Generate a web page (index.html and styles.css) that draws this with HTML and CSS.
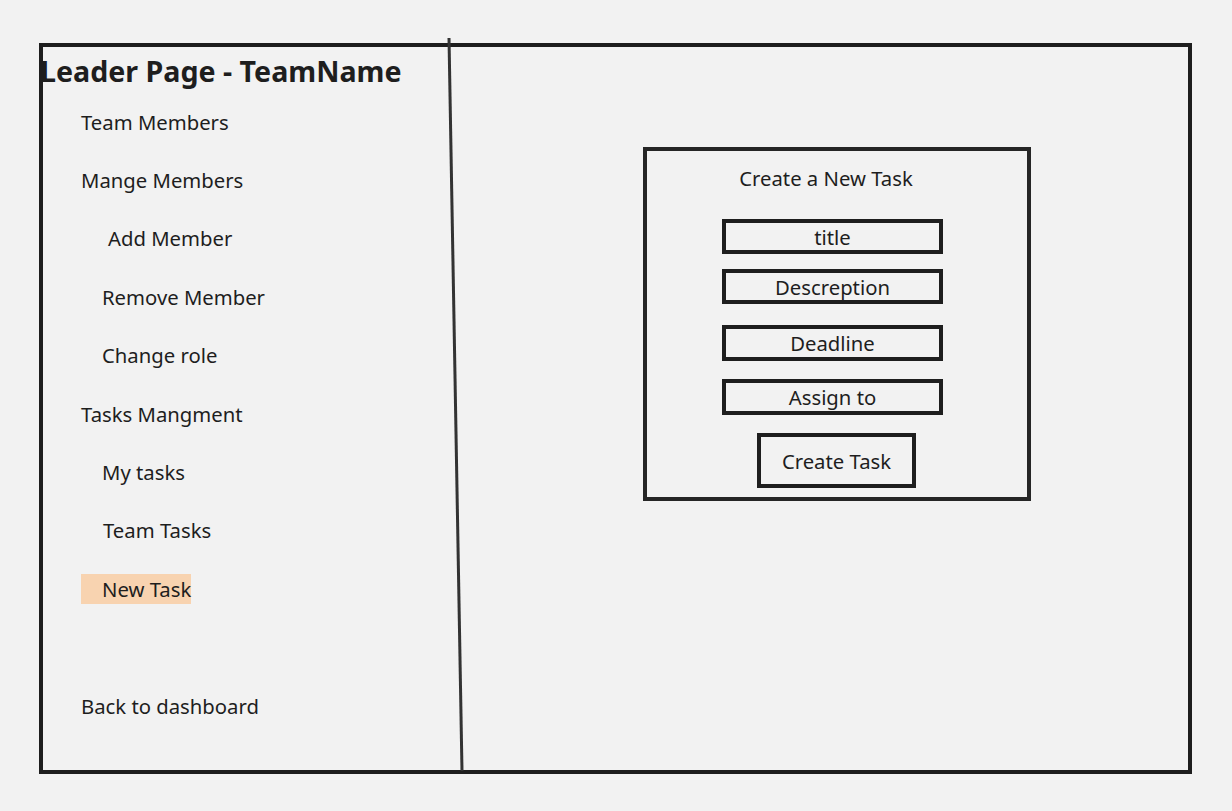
FILE: index.html
```html
<!DOCTYPE html>
<html lang="en">
<head>
<meta charset="UTF-8">
<meta name="viewport" content="width=device-width, initial-scale=1.0">
<title>Leader Page - New Task</title>
<link rel="stylesheet" href="styles.css">
</head>
<body>

<div class="frame">
  <div class="sidebar">
    <h1 class="page-title">Leader Page - TeamName</h1>
    <div class="nav-item">Team Members</div>
    <div class="nav-item">Mange Members</div>
    <div class="nav-item sub-wide">Add Member</div>
    <div class="nav-item sub">Remove Member</div>
    <div class="nav-item sub">Change role</div>
    <div class="nav-item">Tasks Mangment</div>
    <div class="nav-item sub">My tasks</div>
    <div class="nav-item sub team">Team Tasks</div>
    <div class="nav-item"><span class="active">New Task</span></div>
    <div class="nav-item"></div>
    <div class="nav-item">Back to dashboard</div>
  </div>

  <!-- hand drawn divider between the menu and the content -->
  <svg class="divider" width="30" height="735" viewBox="0 0 30 735">
    <line x1="6" y1="0" x2="19" y2="733" stroke="#333" stroke-width="3"/>
  </svg>

  <div class="main">
    <div class="task-card">
      <div class="card-title">Create a New Task</div>
      <div class="field f-title">title</div>
      <div class="field f-desc">Descreption</div>
      <div class="field f-deadline">Deadline</div>
      <div class="field f-assign">Assign to</div>
      <div class="create-btn">Create Task</div>
    </div>
  </div>
</div>

</body>
</html>
```

FILE: styles.css
```css
body {
  margin: 0;
  background: #f2f2f2;
  font-family: "Noto Sans", "Open Sans", sans-serif;
  color: #1e1e1e;
}

.frame {
  position: relative;
  box-sizing: border-box;
  margin: 43px 0 0 39px;
  width: 1153px;
  height: 731px;
  border: 4px solid #1e1e1e;
  display: flex;
}

.sidebar {
  width: 410px;
  flex: none;
}

.page-title {
  margin: 6px 0 0 -3px;
  font-size: 28.6px;
  line-height: 36px;
  font-weight: 700;
}

.nav-item {
  height: 58.4px;
  line-height: 58.4px;
  font-size: 20.3px;
  padding-left: 38px;
  white-space: nowrap;
}

.nav-item:nth-of-type(1) {
  margin-top: 3.6px;
}

.nav-item.sub {
  padding-left: 59px;
}

.nav-item.sub-wide {
  padding-left: 65px;
}

.nav-item.team {
  padding-left: 60px;
}

.nav-item .active {
  background: #f8d3b0;
  padding: 1px 0 1px 21px;
}

.divider {
  position: absolute;
  top: -9px;
  left: 400px;
}

.main {
  flex: 1;
  padding: 100px 0 0 190px;
}

.task-card {
  box-sizing: border-box;
  width: 388px;
  height: 354px;
  border: 4px solid #262626;
  display: flex;
  flex-direction: column;
  align-items: flex-start;
}

.card-title {
  align-self: stretch;
  margin-top: 13px;
  padding-right: 22px;
  text-align: center;
  font-size: 20.3px;
  line-height: 28px;
}

.field {
  box-sizing: border-box;
  margin-left: 75px;
  width: 221px;
  height: 35px;
  border: 4px solid #1e1e1e;
  padding-top: 1px;
  text-align: center;
  font-size: 20.3px;
  line-height: 27px;
}

.f-title {
  margin-top: 27px;
}

.f-desc {
  margin-top: 15px;
}

.f-deadline {
  margin-top: 21px;
  height: 36px;
}

.f-assign {
  margin-top: 18px;
  height: 36px;
}

.create-btn {
  box-sizing: border-box;
  margin: 18px 0 0 110px;
  width: 159px;
  height: 55px;
  border: 4px solid #1e1e1e;
  padding-top: 1px;
  text-align: center;
  font-size: 20.3px;
  line-height: 46px;
}
```
